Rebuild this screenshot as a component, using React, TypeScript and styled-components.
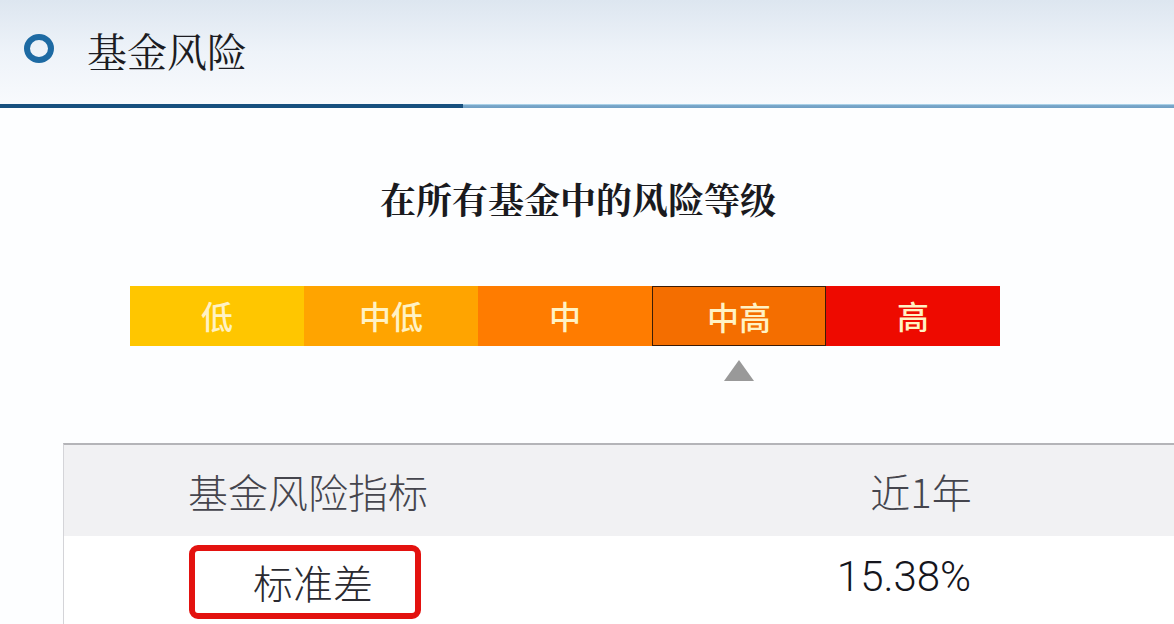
import React from 'react'
import styled, { createGlobalStyle } from 'styled-components'

const levels = ['低', '中低', '中', '中高', '高']
const levelColors = ['#ffc600', '#ffa400', '#ff7c00', '#f46e00', '#ee0a00']
const activeLevel = 3

const GlobalStyle = createGlobalStyle`
  html, body {
    margin: 0;
    padding: 0;
    background: #ffffff;
  }
  body {
    width: 1174px;
    height: 624px;
    overflow: hidden;
    font-family: "Noto Serif CJK SC", "Noto Sans CJK SC", "Liberation Sans", sans-serif;
  }
`

const Page = styled.div`
  width: 1174px;
  height: 624px;
  overflow: hidden;
  background: #fdfeff;
`

const Header = styled.header`
  height: 104px;
  display: flex;
  align-items: center;
  gap: 33px;
  padding-left: 24px;
  background: linear-gradient(180deg, #dde6f0 0%, #eef3f9 50%, #f8fafd 100%);
`

const Ring = styled.span`
  width: 30px;
  height: 29px;
  box-sizing: border-box;
  border: 6px solid #1d6aa3;
  border-radius: 50%;
  margin-top: -8px;
`

const HeaderTitle = styled.h1`
  margin: 0;
  font-size: 40px;
  font-weight: 400;
  color: #1c1c22;
  line-height: 1;
  margin-top: -4px;
`

const Rule = styled.div`
  display: flex;
  height: 4px;
`

const RuleStrong = styled.div`
  width: 463px;
  background: #17507f;
`

const RuleLight = styled.div`
  flex: 1;
  background: linear-gradient(180deg, #c3e6f6 0%, #7aa8cb 35%, #6f9ec3 100%);
`

const Body = styled.main`
  padding-top: 69px;
`

const SectionTitle = styled.h2`
  margin: 0;
  text-align: center;
  font-size: 36px;
  line-height: 43px;
  font-weight: 700;
  color: #1a1a1e;
  padding-right: 18px;
`

const Scale = styled.div`
  margin: 66px 0 0 130px;
  width: 870px;
  display: grid;
  grid-template-columns: repeat(5, 1fr);
`

const Segment = styled.div<{ $color: string; $active: boolean }>`
  height: 60px;
  box-sizing: border-box;
  display: flex;
  align-items: center;
  justify-content: center;
  background: ${p => p.$color};
  border: ${p => (p.$active ? '1.5px solid #3b1c06' : 'none')};
  color: #fff2c4;
  font-family: "Noto Sans CJK SC", sans-serif;
  font-size: 32px;
  font-weight: 500;
  padding-bottom: ${p => (p.$active ? '0' : '3px')};
`

const MarkerRow = styled(Scale)`
  margin-top: 14px;
`

const MarkerCell = styled.div`
  display: flex;
  justify-content: center;
  height: 21px;
`

const Triangle = styled.span`
  width: 0;
  height: 0;
  border-left: 15px solid transparent;
  border-right: 15px solid transparent;
  border-bottom: 21px solid #999999;
`

const Table = styled.div`
  margin: 62px 0 0 63px;
  width: 1220px;
  border-top: 2px solid #b4b4b8;
  border-left: 1px solid #d4d4d8;
  font-family: "Noto Sans CJK SC", "Liberation Sans", sans-serif;
`

const Row = styled.div<{ $head?: boolean }>`
  display: grid;
  grid-template-columns: 494px 1fr;
  height: ${p => (p.$head ? '91px' : '89px')};
  background: ${p => (p.$head ? '#f1f1f3' : '#ffffff')};
`

const Cell = styled.div<{ $head?: boolean }>`
  display: flex;
  align-items: center;
  justify-content: center;
  font-size: 40px;
  font-weight: 300;
  color: ${p => (p.$head ? '#45454d' : '#2a2a30')};
`

const HeaderLabel = styled(Cell)`
  padding-right: 6px;
`

const ValueCell = styled(Cell)`
  padding-right: 34px;
  padding-bottom: 8px;
  font-family: "Roboto", "Liberation Sans", sans-serif;
  font-size: 42px;
  font-weight: 300;
  color: #15151c;
`

const Highlight = styled.span`
  display: inline-flex;
  align-items: center;
  height: 74px;
  box-sizing: border-box;
  padding: 0 42px 0 58px;
  margin-right: 12px;
  margin-top: 2px;
  border: 6px solid #e3120f;
  border-radius: 9px;
`

export default function App() {
  return (
    <Page>
      <GlobalStyle />
      <Header>
        <Ring />
        <HeaderTitle>基金风险</HeaderTitle>
      </Header>
      <Rule>
        <RuleStrong />
        <RuleLight />
      </Rule>
      <Body>
        <SectionTitle>在所有基金中的风险等级</SectionTitle>
        <Scale>
          {levels.map((label, i) => (
            <Segment key={label} $color={levelColors[i]} $active={i === activeLevel}>
              {label}
            </Segment>
          ))}
        </Scale>
        <MarkerRow>
          {levels.map((label, i) => (
            <MarkerCell key={label}>{i === activeLevel && <Triangle />}</MarkerCell>
          ))}
        </MarkerRow>
        <Table>
          <Row $head>
            <HeaderLabel $head>基金风险指标</HeaderLabel>
            <Cell $head>近1年</Cell>
          </Row>
          <Row>
            <Cell>
              <Highlight>标准差</Highlight>
            </Cell>
            <ValueCell>15.38%</ValueCell>
          </Row>
        </Table>
      </Body>
    </Page>
  )
}
